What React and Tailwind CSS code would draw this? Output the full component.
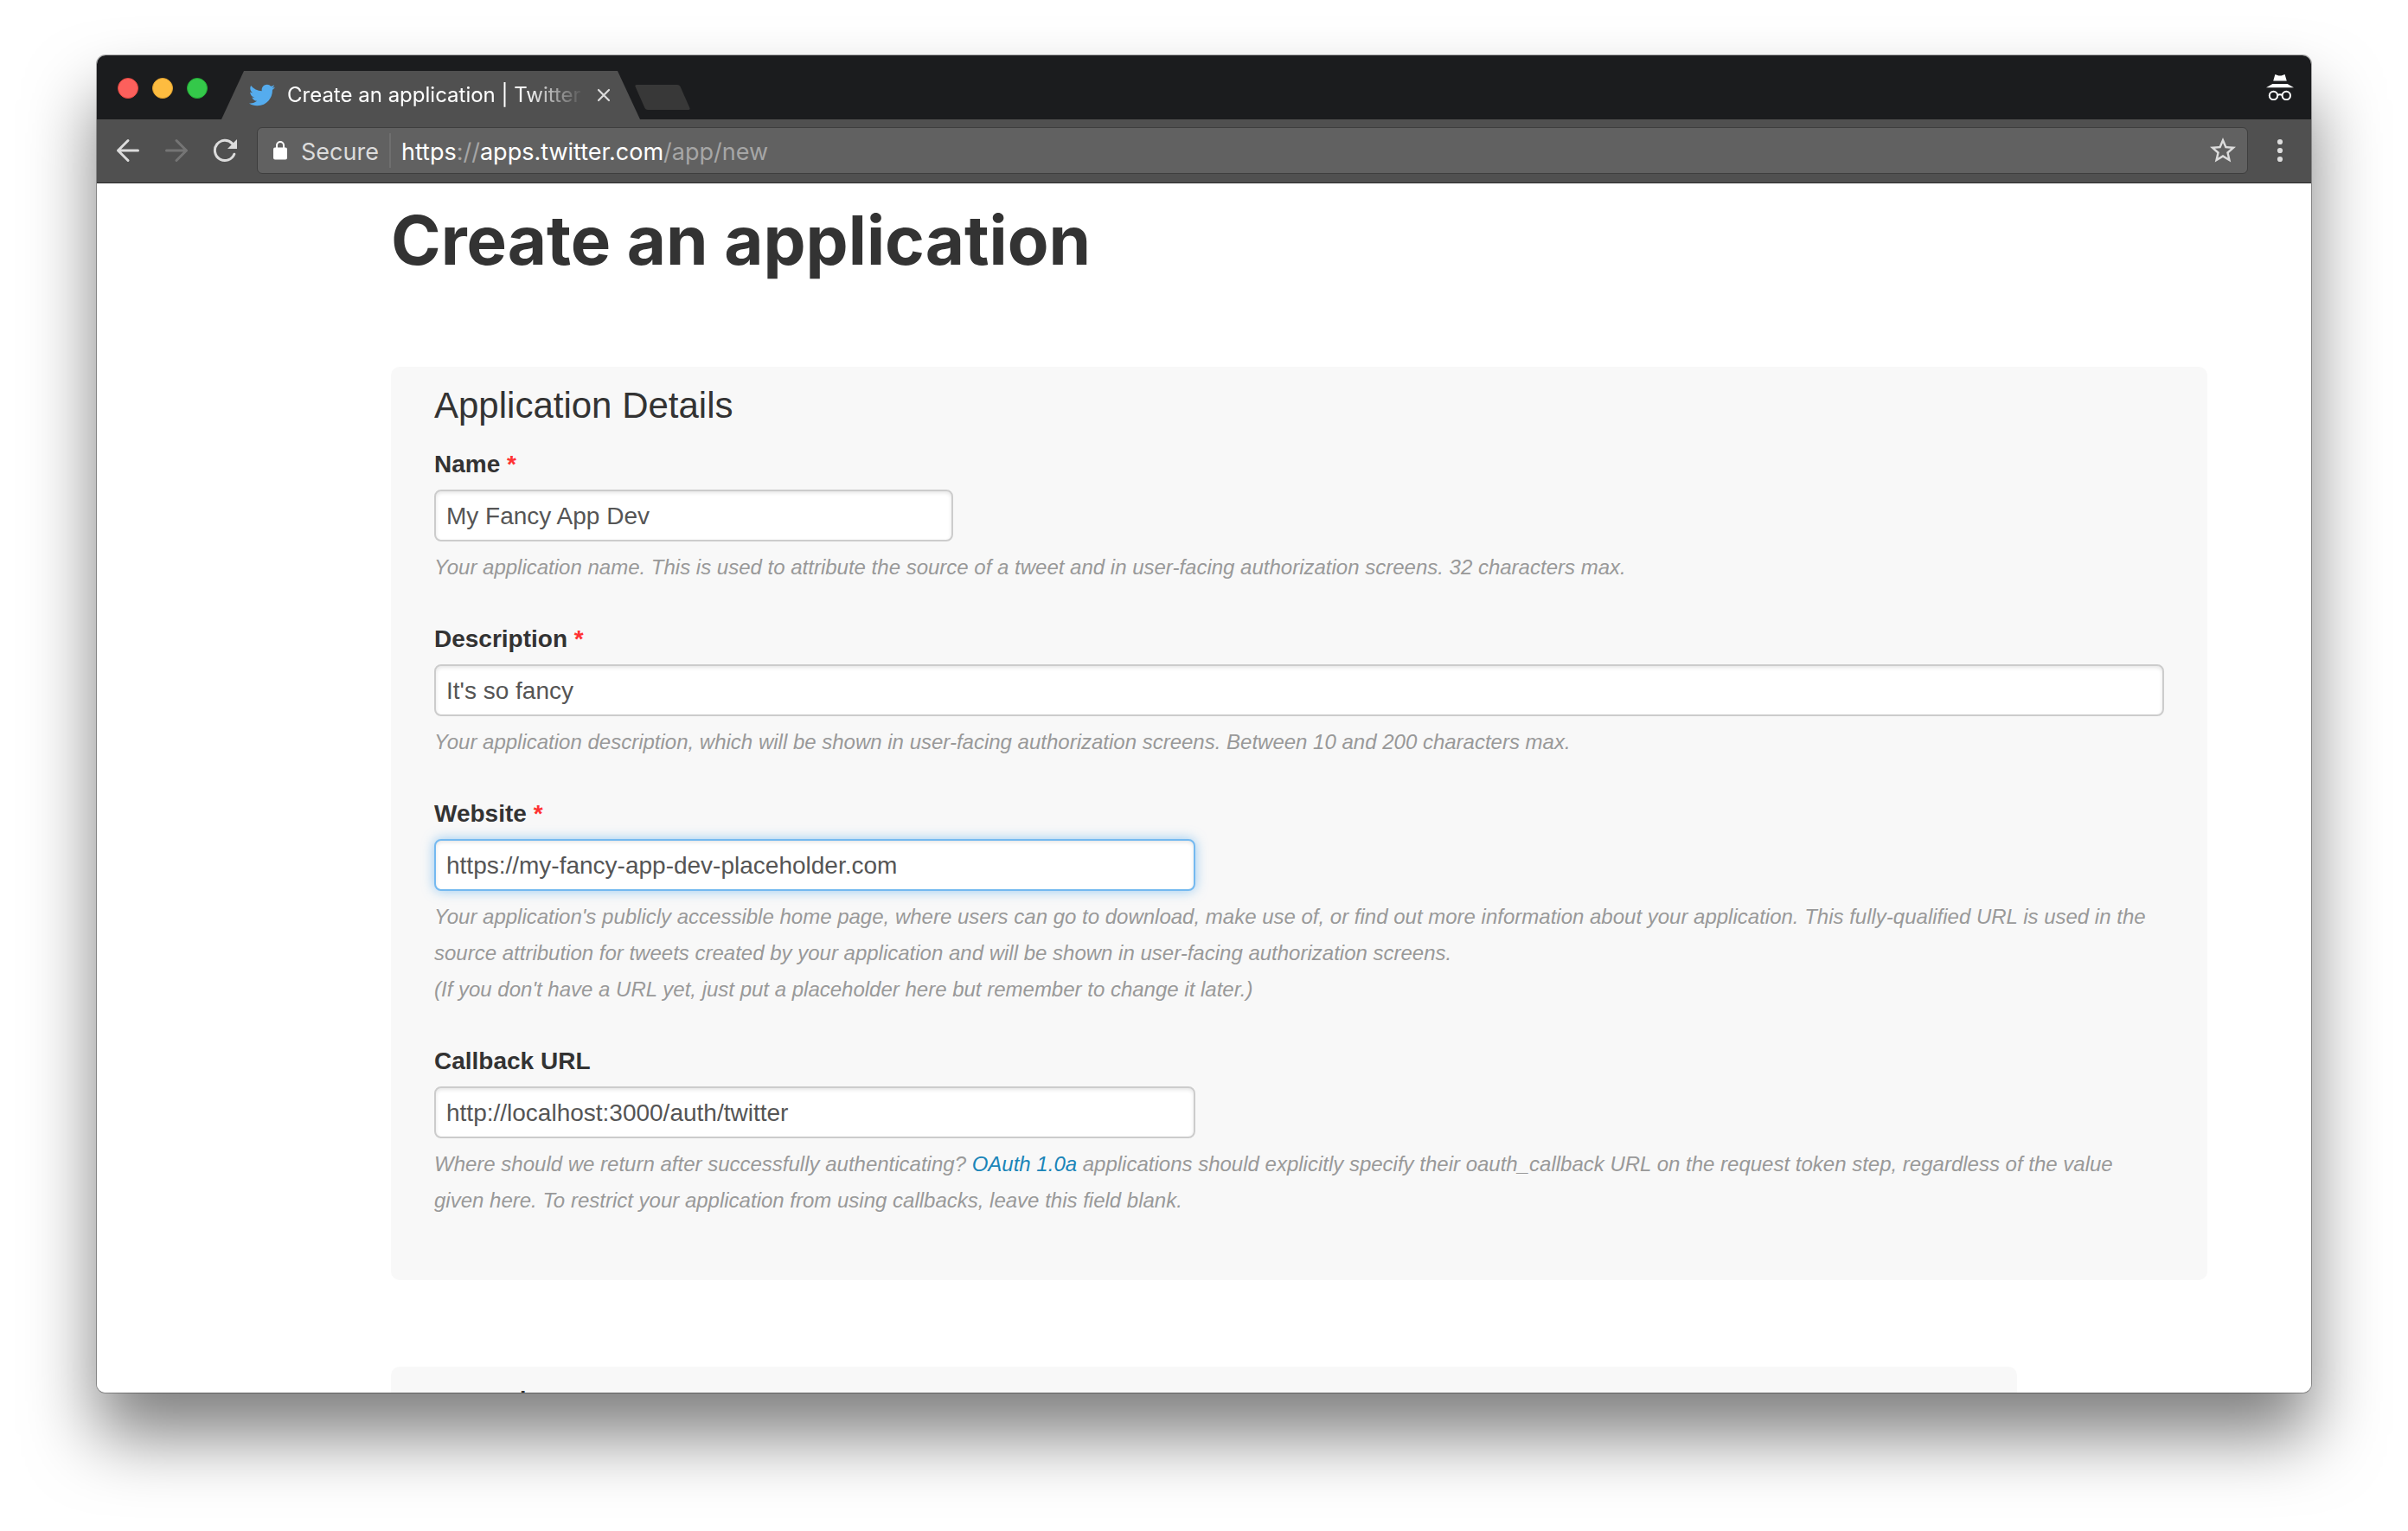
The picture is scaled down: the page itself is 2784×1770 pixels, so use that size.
import React from "react";
import { FaTwitter } from "react-icons/fa";

function BackIcon() {
  return (
    <svg width="28" height="28" viewBox="0 0 28 28" fill="none" stroke="currentColor" strokeWidth="3" strokeLinecap="round" strokeLinejoin="round" aria-hidden="true">
      <path d="M14 2.5 2.5 14 14 25.5M2.5 14H25.5" />
    </svg>
  );
}

function ForwardIcon() {
  return (
    <svg width="28" height="28" viewBox="0 0 28 28" fill="none" stroke="currentColor" strokeWidth="3" strokeLinecap="round" strokeLinejoin="round" aria-hidden="true">
      <path d="M14 2.5 25.5 14 14 25.5M25.5 14H2.5" />
    </svg>
  );
}

function ReloadIcon() {
  return (
    <svg width="28" height="28" viewBox="0 0 28 28" fill="none" aria-hidden="true">
      <path d="M24.8 18.2A11.6 11.6 0 1 1 22.4 5.9" stroke="currentColor" strokeWidth="3" strokeLinecap="round" />
      <path d="M28 1V12H17Z" fill="currentColor" />
    </svg>
  );
}

function LockIcon() {
  return (
    <svg width="16" height="22" viewBox="0 0 16 22" fill="none" aria-hidden="true">
      <path d="M4 9V5a4 4 0 0 1 8 0v4" stroke="#fff" strokeWidth="2" />
      <rect x="0" y="7.5" width="16" height="14" rx="2" fill="#fff" />
    </svg>
  );
}

function StarIcon() {
  return (
    <svg width="36" height="36" viewBox="0 0 24 24" fill="currentColor" aria-hidden="true">
      <path d="M22 9.24l-7.19-.62L12 2 9.19 8.63 2 9.24l5.46 4.73L5.82 21 12 17.27 18.18 21l-1.63-7.03L22 9.24zM12 15.4l-3.76 2.27 1-4.28-3.32-2.88 4.38-.38L12 6.1l1.71 4.04 4.38.38-3.32 2.88 1 4.28L12 15.4z" />
    </svg>
  );
}

function IncognitoIcon() {
  return (
    <svg width="32" height="30" viewBox="0 0 32 30" fill="none" role="img" aria-label="Incognito">
      <path d="M10.4 0 13 .9Q16 2.2 19 .9L21.6 0 23.8 7.4H8.2Z" fill="#fff" />
      <path d="M7.4 11H24.6L32 15.3H0Z" fill="#fff" />
      <circle cx="8.5" cy="24.5" r="4.7" stroke="#fff" strokeWidth="2" />
      <circle cx="23.3" cy="24.5" r="4.7" stroke="#fff" strokeWidth="2" />
      <path d="M13 24q2.9-1.6 5.8 0" stroke="#fff" strokeWidth="2" />
    </svg>
  );
}

function TabStrip() {
  return (
    <header className="flex h-[74px] shrink-0 bg-[#1b1c1e] pl-6 pr-5">
      <div className="mt-px flex items-center gap-4">
        <button type="button" aria-label="Close window" className="size-6 rounded-full border border-[#e2463f] bg-[#fc605c]" />
        <button type="button" aria-label="Minimize window" className="size-6 rounded-full border border-[#e1a12f] bg-[#fdbc40]" />
        <button type="button" aria-label="Zoom window" className="size-6 rounded-full border border-[#24a936] bg-[#34c84a]" />
      </div>
      <div className="ml-4 flex h-14 w-[484px] items-center self-end bg-[#505050] pl-8 pr-[34px] [clip-path:polygon(26px_0,calc(100%-26px)_0,100%_100%,0_100%)]">
        <FaTwitter className="size-[30px] shrink-0 text-[#55acee]" aria-hidden="true" />
        <span className="ml-3.5 min-w-0 flex-1 overflow-hidden whitespace-nowrap text-2xl text-white [mask-image:linear-gradient(to_right,#000_80%,transparent)]">
          Create an application | Twitter Application Management
        </span>
        <button type="button" aria-label="Close tab" className="ml-3.5 shrink-0 text-[#dcdcdc]">
          <svg width="16" height="16" viewBox="0 0 16 16" stroke="currentColor" strokeWidth="2.2" strokeLinecap="round" aria-hidden="true">
            <path d="M2 2 14 14M14 2 2 14" />
          </svg>
        </button>
      </div>
      <button type="button" aria-label="New tab" className="-ml-1.5 mt-[34px] self-start">
        <svg width="64" height="29" viewBox="0 0 64 29" aria-hidden="true">
          <path d="M2 0H49Q51.500 0 52.500 2L63.500 27Q64 29 62 29H15Q12.500 29 11.500 27L.5 2Q0 0 2 0Z" fill="#383838" />
        </svg>
      </button>
      <div className="ml-auto flex items-center">
        <IncognitoIcon />
      </div>
    </header>
  );
}

function Toolbar() {
  return (
    <nav aria-label="Browser toolbar" className="flex shrink-0 items-center border-b border-[#2a2a2a] bg-[#505050] pt-[9px] pb-[10px] pl-[22px] pr-8 text-[#dcdcdc]">
      <button type="button" aria-label="Back"><BackIcon /></button>
      <button type="button" aria-label="Forward" disabled className="ml-7 text-[#757575]"><ForwardIcon /></button>
      <button type="button" aria-label="Reload" className="ml-7"><ReloadIcon /></button>
      <div className="ml-[23px] flex h-[54px] min-w-0 flex-1 items-center rounded-md border border-[#3e3e3e] bg-[#616161] pl-[18px] pr-2.5 text-[27px]">
        <LockIcon />
        <span className="ml-4 pt-1">Secure</span>
        <span className="ml-3 h-10 w-0.5 bg-[#6f6f6f]" />
        <span className="ml-3 pt-1 whitespace-nowrap text-[#a6a6a6]">
          <span className="text-white">https</span>://<span className="text-white">apps.twitter.com</span>/app/new
        </span>
        <button type="button" aria-label="Bookmark this page" className="ml-auto"><StarIcon /></button>
      </div>
      <button type="button" aria-label="Menu" className="ml-[33px]">
        <svg width="8" height="28" viewBox="0 0 8 28" fill="currentColor" aria-hidden="true">
          <circle cx="4" cy="4" r="3.100" />
          <circle cx="4" cy="14" r="3.100" />
          <circle cx="4" cy="24" r="3.100" />
        </svg>
      </button>
    </nav>
  );
}

const plainInput = "border-[#ccc] shadow-[inset_0_2px_4px_rgba(0,0,0,0.1)]";
const activeInput = "border-[#74b9f0] shadow-[inset_0_2px_4px_rgba(0,0,0,0.1),0_0_14px_rgba(82,168,236,0.6)]";

function Field({ id, label, required, value, width, active, children }) {
  return (
    <div className="flex flex-col">
      <label htmlFor={id} className="text-[28px] leading-[42px] font-bold">
        {label}
        {required && <span className="text-[#f33]"> *</span>}
      </label>
      <input
        id={id}
        type="text"
        defaultValue={value}
        aria-describedby={`${id}-help`}
        className={`mt-2 h-[60px] rounded-lg border-2 bg-white px-3 pt-0.5 text-[28px] text-[#555] outline-none ${width} ${active ? activeInput : plainInput}`}
      />
      <p id={`${id}-help`} className="mt-[9px] text-2xl leading-[42px] text-[#999] italic">
        {children}
      </p>
    </div>
  );
}

function Page() {
  return (
    <main className="min-h-0 flex-1 overflow-hidden bg-white pl-[340px] pr-[120px] pt-4 font-['Liberation_Sans',Arial,sans-serif] text-[#333]">
      <h1 className="font-['Inter',sans-serif] text-[78px] leading-[100px] font-bold">Create an application</h1>

      <section className="mt-24 rounded-[10px] bg-[#f8f8f8] px-[50px] pt-[15px] pb-[71px]">
        <h2 className="text-[42px] leading-[60px]">Application Details</h2>
        <form className="mt-[17px] flex flex-col gap-[41px]">
          <Field id="name" label="Name" required value="My Fancy App Dev" width="w-[600px]">
            Your application name. This is used to attribute the source of a tweet and in user-facing authorization screens. 32 characters max.
          </Field>
          <Field id="description" label="Description" required value="It's so fancy" width="w-full">
            Your application description, which will be shown in user-facing authorization screens. Between 10 and 200 characters max.
          </Field>
          <Field id="website" label="Website" required value="https://my-fancy-app-dev-placeholder.com" width="w-[880px]" active>
            Your application's publicly accessible home page, where users can go to download, make use of, or find out more information about your application. This fully-qualified URL is used in the source attribution for tweets created by your application and will be shown in user-facing authorization screens.
            <br />
            (If you don't have a URL yet, just put a placeholder here but remember to change it later.)
          </Field>
          <Field id="callback" label="Callback URL" value="http://localhost:3000/auth/twitter" width="w-[880px]">
            Where should we return after successfully authenticating? <a href="#oauth" className="text-[#1b85b8]">OAuth 1.0a</a> applications should explicitly specify their oauth_callback URL on the request token step, regardless of the value given here. To restrict your application from using callbacks, leave this field blank.
          </Field>
        </form>
      </section>

      <section className="mt-[100px] mr-[220px] rounded-[10px] bg-[#f8f8f8] px-[50px] pt-[15px] pb-[71px]">
        <h2 className="text-[42px] leading-[60px]">Developer Agreement</h2>
      </section>
    </main>
  );
}

export default function App() {
  return (
    <div className="flex h-screen flex-col overflow-hidden bg-white px-28 pt-16 pb-40 font-['Inter',sans-serif]">
      <div className="flex min-h-0 flex-1 flex-col overflow-hidden rounded-[10px] shadow-[0_0_0_1px_rgba(0,0,0,0.3),0_50px_80px_rgba(0,0,0,0.5)]">
        <TabStrip />
        <Toolbar />
        <Page />
      </div>
    </div>
  );
}
